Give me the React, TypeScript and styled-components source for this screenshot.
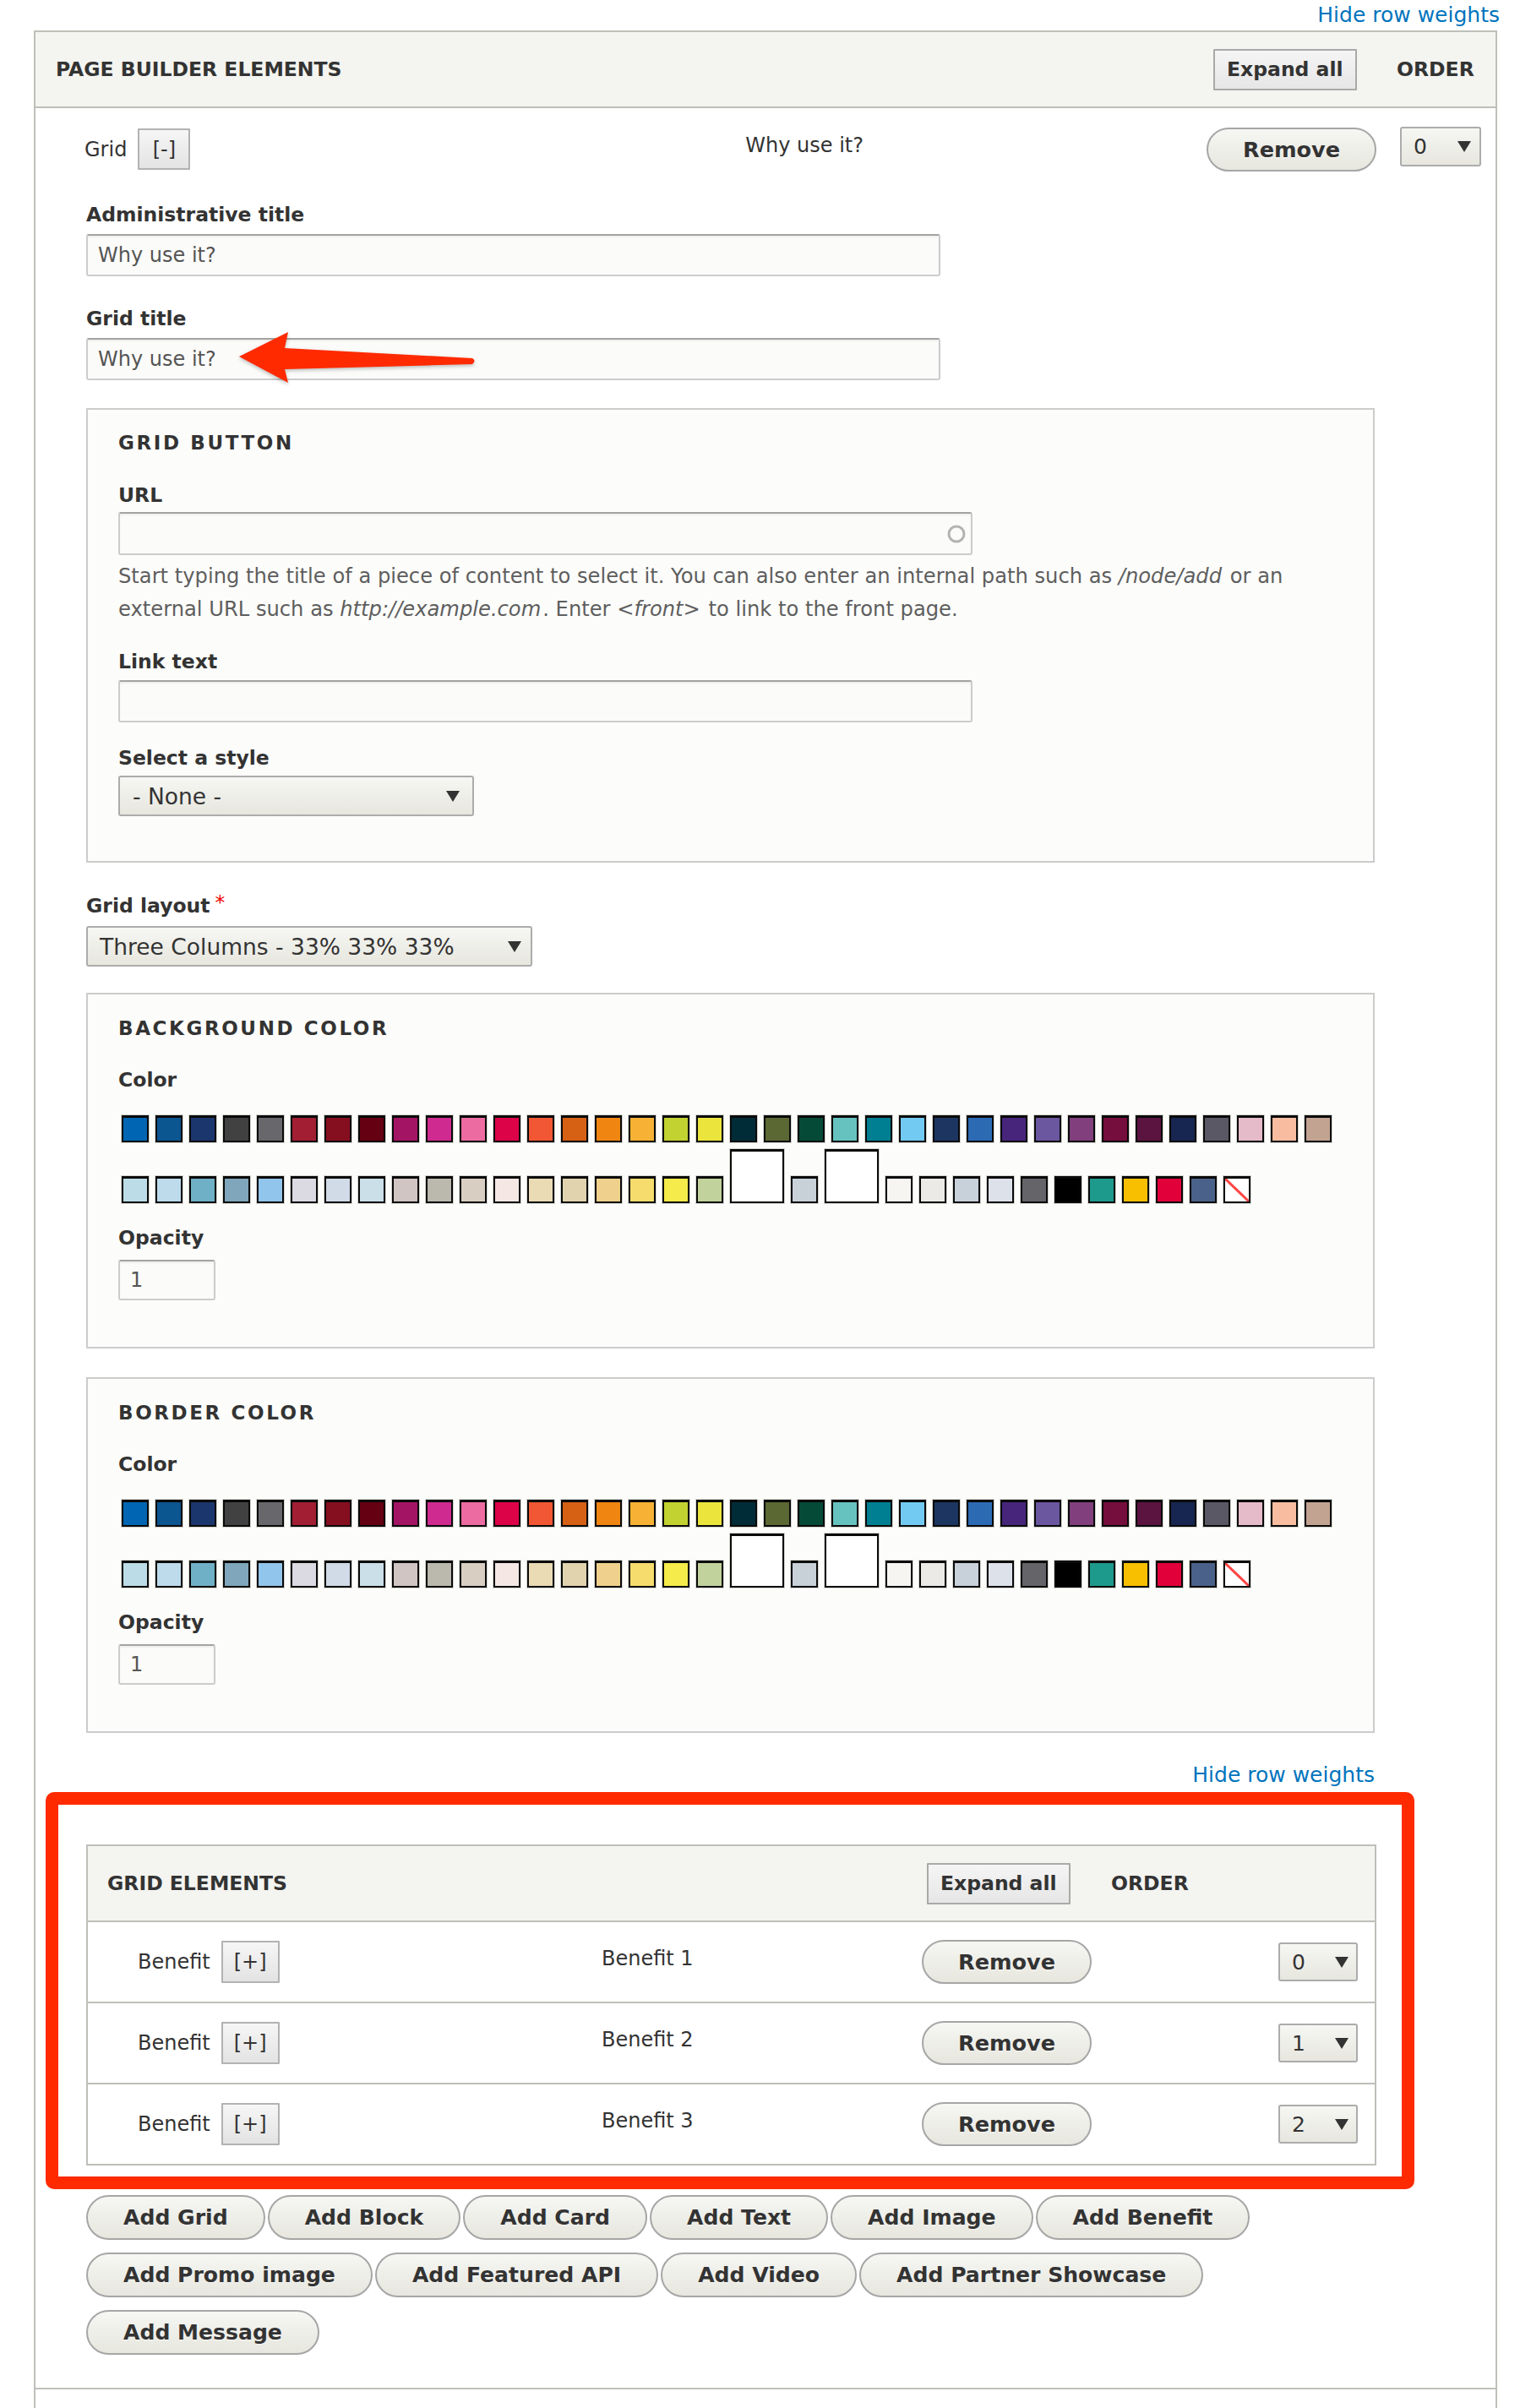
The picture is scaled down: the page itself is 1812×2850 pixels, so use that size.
import React from "react";
import styled, { createGlobalStyle } from "styled-components";

const GlobalStyle = createGlobalStyle`
  html, body { margin: 0; padding: 0; background: #fff; }
  body {
    font-family: "DejaVu Sans", "Liberation Sans", sans-serif;
    color: #333;
  }
  * { box-sizing: border-box; }
`;

const PALETTE_TOP = [
  "#0066b3", "#0b5590", "#1b356d", "#414141", "#68676c", "#a21e33", "#860f1f", "#650012",
  "#a41464", "#cf2a8f", "#ec6ba1", "#dd0349", "#f15734", "#d66014", "#f08511", "#f7b134",
  "#c2d231", "#ebe43d", "#002c38", "#5b6833", "#054a37", "#66c2bf", "#017f92", "#72caf3",
  "#1d3561", "#2c6ab4", "#46257a", "#6b56a0", "#813f7d", "#750e3c", "#5b1440", "#172650",
  "#5b5866", "#e6bbc9", "#f8bda0", "#c2a391",
];

type Chip = { c: string; big?: boolean; none?: boolean };

const PALETTE_BOTTOM: Chip[] = [
  { c: "#bcdce7" }, { c: "#bddbeb" }, { c: "#6fb0c7" }, { c: "#7fa6bb" }, { c: "#92c5eb" },
  { c: "#dbd9e1" }, { c: "#d0dbe7" }, { c: "#cbdfe9" }, { c: "#d0c5c2" }, { c: "#bbb9ad" },
  { c: "#d8cfc2" }, { c: "#f5e8e4" }, { c: "#eadbb5" }, { c: "#e0d3ae" }, { c: "#efd18d" },
  { c: "#f6dc6d" }, { c: "#f5eb4a" }, { c: "#c2d29c" }, { c: "#ffffff", big: true },
  { c: "#c8d0d8" }, { c: "#ffffff", big: true }, { c: "#f6f5f2" }, { c: "#ebeae6" },
  { c: "#c8d0da" }, { c: "#dde1ea" }, { c: "#646469" }, { c: "#000000" }, { c: "#1e9a8c" },
  { c: "#f8bf00" }, { c: "#e1003a" }, { c: "#4a6289" }, { c: "#ffffff", none: true },
];

const ADD_BUTTONS = [
  "Add Grid", "Add Block", "Add Card", "Add Text", "Add Image", "Add Benefit",
  "Add Promo image", "Add Featured API", "Add Video", "Add Partner Showcase", "Add Message",
];

const Page = styled.div`
  width: 1812px;
`;

const TopBar = styled.div`
  display: flex;
  justify-content: flex-end;
  height: 36px;
  padding: 3px 37px 0 0;
`;

const WeightsLink = styled.a`
  color: #0074bd;
  font-size: 25px;
  line-height: 29px;
  text-decoration: none;
`;

const Frame = styled.div`
  margin-left: 40px;
  width: 1732px;
  border: 2px solid #bfbfba;
  border-bottom: 0;
`;

const HeadRow = styled.div<{ $pl: number }>`
  display: flex;
  align-items: center;
  height: 90px;
  padding-left: ${(p) => p.$pl}px;
  background: #f4f4f0;
  border-bottom: 2px solid #bfbfba;
  font-size: 23.5px;
  font-weight: bold;
`;

const HeadTitle = styled.div`
  flex: 1;
`;

const HeadCell = styled.div<{ $w: number }>`
  width: ${(p) => p.$w}px;
`;

const SquareButton = styled.button`
  height: 49px;
  padding: 0 14px;
  border: 2px solid #a9a9a9;
  border-radius: 1px;
  background: linear-gradient(#f5f5f5, #e6e6e6);
  font-family: inherit;
  font-size: 23.5px;
  font-weight: bold;
  color: #333;
`;

const BodyRow = styled.div`
  display: flex;
  border-bottom: 2px solid #bfbfba;
`;

const ContentCell = styled.div`
  width: 1587px;
  padding: 22px 0 39px 60px;
`;

const WeightCell = styled.div`
  flex: 1;
  padding: 22px 0 0 28px;
`;

const NextRow = styled.div`
  height: 22px;
`;

const ItemHeader = styled.div`
  display: flex;
  align-items: center;
  height: 53px;
  margin-left: -2px;
`;

const ItemLead = styled.div<{ $w: number }>`
  display: flex;
  align-items: center;
  gap: 13px;
  width: ${(p) => p.$w}px;
  font-size: 24px;
`;

const ItemTitle = styled.div<{ $w: number }>`
  width: ${(p) => p.$w}px;
  margin-bottom: 9px;
  font-size: 24px;
`;

const ToggleButton = styled.button<{ $h: number }>`
  height: ${(p) => p.$h}px;
  min-width: 62px;
  padding: 0 13px;
  border: 2px solid #b2b2b2;
  border-radius: 1px;
  background: linear-gradient(#f6f6f6, #e3e3e3);
  font-family: inherit;
  font-size: 24px;
  color: #333;
`;

const PillButton = styled.button`
  height: 53px;
  padding: 0 42px;
  border: 2px solid #a6a6a6;
  border-radius: 27px;
  background: linear-gradient(#f6f6f3, #e7e7df);
  font-family: inherit;
  font-size: 25.1px;
  font-weight: bold;
  color: #333;
  text-shadow: 0 1px rgba(255, 255, 255, 0.6);
  white-space: nowrap;
`;

const RemoveButton = styled(PillButton)`
  height: 52px;
  padding: 0 41px;
  margin-left: auto;
  font-size: 25.5px;
`;

const FormItem = styled.div<{ $mt: number }>`
  position: relative;
  margin-top: ${(p) => p.$mt}px;
`;

const Label = styled.label<{ $mb: number }>`
  display: block;
  margin-bottom: ${(p) => p.$mb}px;
  font-size: 23.5px;
  font-weight: bold;
  line-height: 32px;
`;

const Required = styled.span`
  position: relative;
  top: -4px;
  margin-left: 6px;
  color: #e00;
  font-weight: normal;
`;

const TextInput = styled.input<{ $w: number; $h: number }>`
  display: block;
  width: ${(p) => p.$w}px;
  height: ${(p) => p.$h}px;
  padding: 0 12px;
  border: 2px solid #ccc;
  border-top-color: #a3a3a3;
  border-radius: 3px;
  background: #fbfbf9;
  box-shadow: inset 0 2px 2px rgba(0, 0, 0, 0.05);
  font-family: inherit;
  font-size: 24px;
  color: #555;
  outline: none;
`;

const AutoShell = styled.div`
  display: flex;
  align-items: center;
  width: 1011px;
  height: 51px;
  padding: 0 5px 0 12px;
  border: 2px solid #ccc;
  border-top-color: #a3a3a3;
  border-radius: 3px;
  background: #fbfbf9;
  box-shadow: inset 0 2px 2px rgba(0, 0, 0, 0.05);
`;

const BareInput = styled.input`
  flex: 1;
  height: 100%;
  border: 0;
  background: transparent;
  font-family: inherit;
  font-size: 24px;
  outline: none;
`;

const Description = styled.div`
  margin-top: 6px;
  font-size: 24.2px;
  line-height: 39px;
  color: #5e5e5e;
`;

const Em = styled.em`
  padding-right: 2px;
`;

const Fieldset = styled.div<{ $mt: number }>`
  width: 1525px;
  margin-top: ${(p) => p.$mt}px;
  padding: 23px 36px 53px;
  border: 2px solid #ccc;
  background: #fcfcfa;
`;

const ColorFieldset = styled(Fieldset)`
  padding-top: 24px;
  padding-bottom: 55px;
`;

const Legend = styled.div`
  font-size: 23px;
  font-weight: bold;
  line-height: 32px;
  letter-spacing: 2.6px;
  text-transform: uppercase;
`;

const SelectBox = styled.div<{ $w: number; $h: number; $pl: number; $pr: number; $fs: number }>`
  display: flex;
  align-items: center;
  justify-content: space-between;
  width: ${(p) => p.$w}px;
  height: ${(p) => p.$h}px;
  padding: 0 ${(p) => p.$pr}px 0 ${(p) => p.$pl}px;
  border: 2px solid #acacac;
  border-radius: 3px;
  background: linear-gradient(#f6f6f3, #e7e7df);
  font-size: ${(p) => p.$fs}px;
  color: #333;
  white-space: nowrap;
`;

const SwatchRow = styled.div<{ $h: number }>`
  display: flex;
  align-items: flex-end;
  height: ${(p) => p.$h}px;
`;

const Swatch = styled.span<{ $c: string; $big?: boolean; $none?: boolean }>`
  display: block;
  flex: none;
  width: ${(p) => (p.$big ? 64 : 32)}px;
  height: ${(p) => (p.$big ? 64 : 32)}px;
  margin: 4px;
  border: 2px solid #0a0a0a;
  border-top-width: 3px;
  box-shadow: 0 0 0 1px #d4d4d0;
  background: ${(p) =>
    p.$none
      ? "linear-gradient(to top right, #fff calc(50% - 2px), #f44 calc(50% - 1px), #f44 calc(50% + 1px), #fff calc(50% + 2px))"
      : p.$c};
`;

const GridSection = styled.div`
  position: relative;
  margin-top: 35px;
`;

const SectionLinks = styled.div`
  display: flex;
  justify-content: flex-end;
  padding-right: 2px;
`;

const Highlight = styled.div`
  position: absolute;
  left: -48px;
  top: 35px;
  width: 1620px;
  height: 470px;
  border: 15px solid #ff2a00;
  border-radius: 10px;
  pointer-events: none;
`;

const ArrowMark = styled.svg`
  position: absolute;
  left: 168px;
  top: 24px;
  overflow: visible;
  filter: drop-shadow(0 2px 2px rgba(0, 0, 0, 0.25));
  pointer-events: none;
`;

const ElementsTable = styled.div`
  margin-top: 68px;
  border: 2px solid #bfbfba;
`;

const ElementRow = styled.div`
  display: flex;
  align-items: center;
  height: 96px;
  padding-left: 59px;
  border-bottom: 2px solid #bfbfba;
  &:last-child {
    height: 94px;
    border-bottom: 0;
  }
`;

const RemoveCell = styled.div<{ $w: number }>`
  width: ${(p) => p.$w}px;
`;

const AddBar = styled.div`
  display: flex;
  flex-wrap: wrap;
  gap: 15px 3px;
  margin-top: 35px;
`;

function Caret() {
  return (
    <svg width="16" height="13" viewBox="0 0 16 13">
      <polygon points="0,0 16,0 8,13" fill="#333" />
    </svg>
  );
}

function Palette() {
  return (
    <>
      <SwatchRow $h={40}>
        {PALETTE_TOP.map((c, i) => (
          <Swatch key={i} $c={c} />
        ))}
      </SwatchRow>
      <SwatchRow $h={72}>
        {PALETTE_BOTTOM.map((s, i) => (
          <Swatch key={i} $c={s.c} $big={s.big} $none={s.none} />
        ))}
      </SwatchRow>
    </>
  );
}

function ColorGroup({ title, mt }: { title: string; mt: number }) {
  return (
    <ColorFieldset $mt={mt}>
      <Legend>{title}</Legend>
      <FormItem $mt={29}>
        <Label $mb={22}>Color</Label>
        <Palette />
      </FormItem>
      <FormItem $mt={21}>
        <Label $mb={10}>Opacity</Label>
        <TextInput $w={115} $h={48} defaultValue="1" />
      </FormItem>
    </ColorFieldset>
  );
}

function GridElements() {
  const rows = ["Benefit 1", "Benefit 2", "Benefit 3"];
  return (
    <GridSection>
      <SectionLinks>
        <WeightsLink href="#">Hide row weights</WeightsLink>
      </SectionLinks>
      <ElementsTable>
        <HeadRow $pl={23}>
          <HeadTitle>GRID ELEMENTS</HeadTitle>
          <HeadCell $w={218}>
            <SquareButton>Expand all</SquareButton>
          </HeadCell>
          <HeadCell $w={312}>ORDER</HeadCell>
        </HeadRow>
        {rows.map((r, i) => (
          <ElementRow key={r}>
            <ItemLead $w={549}>
              <span>Benefit</span>
              <ToggleButton $h={50}>[+]</ToggleButton>
            </ItemLead>
            <ItemTitle $w={379}>{r}</ItemTitle>
            <RemoveCell $w={422}>
              <RemoveButton>Remove</RemoveButton>
            </RemoveCell>
            <SelectBox $w={94} $h={46} $pl={14} $pr={9} $fs={25}>
              <span>{i}</span>
              <Caret />
            </SelectBox>
          </ElementRow>
        ))}
      </ElementsTable>
      <Highlight />
    </GridSection>
  );
}

export default function App() {
  return (
    <Page>
      <GlobalStyle />
      <TopBar>
        <WeightsLink href="#">Hide row weights</WeightsLink>
      </TopBar>
      <Frame>
        <HeadRow $pl={24}>
          <HeadTitle>PAGE BUILDER ELEMENTS</HeadTitle>
          <HeadCell $w={217}>
            <SquareButton>Expand all</SquareButton>
          </HeadCell>
          <HeadCell $w={117}>ORDER</HeadCell>
        </HeadRow>
        <BodyRow>
          <ContentCell>
            <ItemHeader>
              <ItemLead $w={784}>
                <span>Grid</span>
                <ToggleButton $h={49}>[-]</ToggleButton>
              </ItemLead>
              <ItemTitle $w={547}>Why use it?</ItemTitle>
              <RemoveButton>Remove</RemoveButton>
            </ItemHeader>

            <FormItem $mt={35}>
              <Label $mb={7}>Administrative title</Label>
              <TextInput $w={1011} $h={50} defaultValue="Why use it?" />
            </FormItem>

            <FormItem $mt={34}>
              <Label $mb={7}>Grid title</Label>
              <TextInput $w={1011} $h={50} defaultValue="Why use it?" />
              <ArrowMark width="300" height="80" viewBox="0 0 300 80">
                <path
                  d="M13 37 L71 8 L67 27 L289 39 Q294 42 289 46 L67 52 L71 68 Z"
                  fill="#ff2a00"
                />
              </ArrowMark>
            </FormItem>

            <Fieldset $mt={33}>
              <Legend>Grid button</Legend>
              <FormItem $mt={30}>
                <Label $mb={4}>URL</Label>
                <AutoShell>
                  <BareInput />
                  <svg width="24" height="24" viewBox="0 0 24 24">
                    <circle cx="12" cy="12" r="9" fill="none" stroke="#b3b3b3" strokeWidth="3" />
                  </svg>
                </AutoShell>
                <Description>
                  Start typing the title of a piece of content to select it. You can also enter an
                  internal path such as <Em>/node/add</Em> or an
                  <br />
                  external URL such as <Em>http://example.com</Em>. Enter{" "}
                  <Em>&lt;front&gt;</Em> to link to the front page.
                </Description>
              </FormItem>
              <FormItem $mt={26}>
                <Label $mb={6}>Link text</Label>
                <TextInput $w={1011} $h={50} />
              </FormItem>
              <FormItem $mt={26}>
                <Label $mb={5}>Select a style</Label>
                <SelectBox $w={421} $h={48} $pl={15} $pr={15} $fs={26.5}>
                  <span>- None -</span>
                  <Caret />
                </SelectBox>
              </FormItem>
            </Fieldset>

            <FormItem $mt={35}>
              <Label $mb={8}>
                Grid layout<Required>*</Required>
              </Label>
              <SelectBox $w={528} $h={48} $pl={14} $pr={11} $fs={26.5}>
                <span>Three Columns - 33% 33% 33%</span>
                <Caret />
              </SelectBox>
            </FormItem>

            <ColorGroup title="Background color" mt={31} />
            <ColorGroup title="Border color" mt={34} />

            <GridElements />

            <AddBar>
              {ADD_BUTTONS.map((b) => (
                <PillButton key={b}>{b}</PillButton>
              ))}
            </AddBar>
          </ContentCell>
          <WeightCell>
            <SelectBox $w={96} $h={47} $pl={14} $pr={10} $fs={25}>
              <span>0</span>
              <Caret />
            </SelectBox>
          </WeightCell>
        </BodyRow>
        <NextRow />
      </Frame>
    </Page>
  );
}
